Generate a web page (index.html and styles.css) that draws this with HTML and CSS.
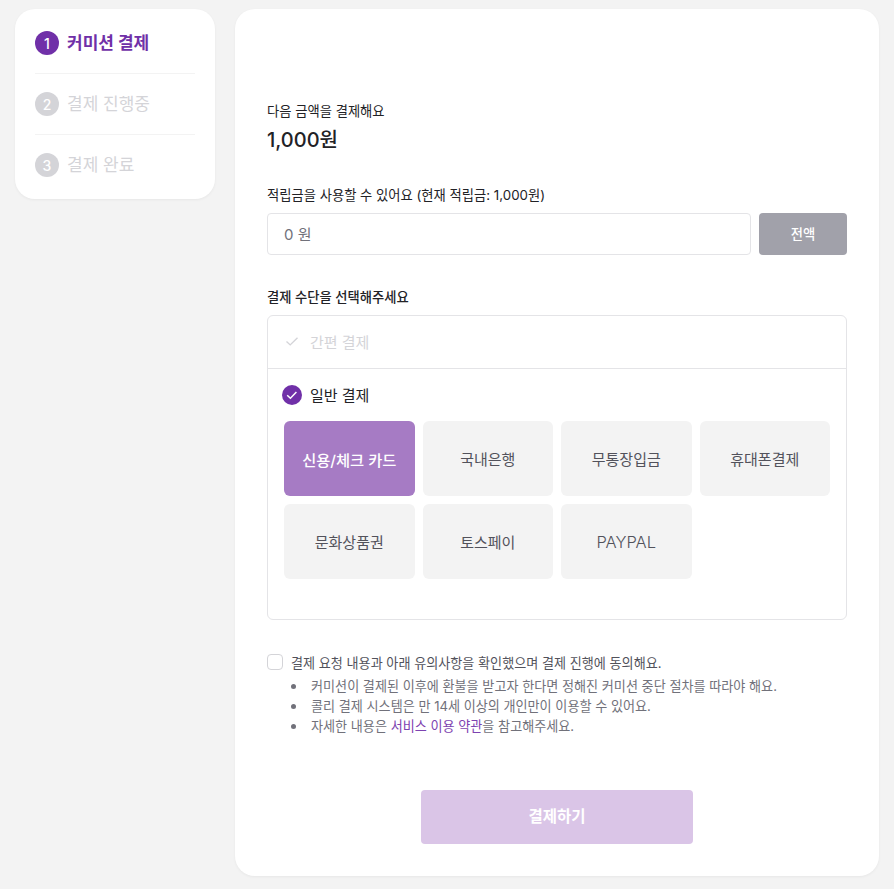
FILE: index.html
```html
<!DOCTYPE html>
<html lang="ko">
  <head>
    <meta charset="UTF-8" />
    <meta name="viewport" content="width=device-width, initial-scale=1.0" />
    <title>커미션 결제</title>
    <link rel="stylesheet" href="styles.css">
  </head>
  <body>
    <div class="page">
      <div class="steps">
        <div class="step active"><span class="num">1</span><span class="step-name">커미션 결제</span></div>
        <div class="step"><span class="num">2</span><span class="step-name">결제 진행중</span></div>
        <div class="step"><span class="num">3</span><span class="step-name">결제 완료</span></div>
      </div>

      <div class="main">
        <div class="label">다음 금액을 결제해요</div>
        <div class="amount">1,000원</div>

        <div class="label points-label">적립금을 사용할 수 있어요 (현재 적립금: 1,000원)</div>
        <div class="points-row">
          <div class="points-input">0 원</div>
          <div class="all-btn">전액</div>
        </div>

        <div class="label method-label">결제 수단을 선택해주세요</div>
        <div class="methods">
          <div class="method-head simple">
            <svg class="tick" width="20" height="20" viewBox="0 0 20 20"><path d="M4.5 10.5l3.7 3.4L15.5 6.8" fill="none" stroke="#d4d4d8" stroke-width="1.4"/></svg>
            <span>간편 결제</span>
          </div>
          <div class="general">
            <div class="method-head">
              <svg width="20" height="20" viewBox="0 0 20 20"><circle cx="10" cy="10" r="10" fill="#7030a8"/><path d="M5.2 10.3l3.2 3 6-6.2" fill="none" stroke="#fff" stroke-width="1.5"/></svg>
              <span>일반 결제</span>
            </div>
            <div class="pay-grid">
              <div class="pay selected">신용/체크 카드</div>
              <div class="pay">국내은행</div>
              <div class="pay">무통장입금</div>
              <div class="pay">휴대폰결제</div>
              <div class="pay">문화상품권</div>
              <div class="pay">토스페이</div>
              <div class="pay latin">PAYPAL</div>
            </div>
          </div>
        </div>

        <div class="agree">
          <span class="checkbox"></span>
          <span>결제 요청 내용과 아래 유의사항을 확인했으며 결제 진행에 동의해요.</span>
        </div>
        <ul class="notes">
          <li>커미션이 결제된 이후에 환불을 받고자 한다면 정해진 커미션 중단 절차를 따라야 해요.</li>
          <li>콜리 결제 시스템은 만 14세 이상의 개인만이 이용할 수 있어요.</li>
          <li>자세한 내용은 <a class="terms">서비스 이용 약관</a>을 참고해주세요.</li>
        </ul>

        <div class="pay-btn">결제하기</div>
      </div>
    </div>
  </body>
</html>
```

FILE: styles.css
```css
* {
  box-sizing: border-box;
}
body {
  margin: 0;
  background-color: #f3f3f3;
  color: #222226;
  font-family: "Inter", "Noto Sans CJK KR", sans-serif;
}
.page {
  display: flex;
  align-items: flex-start;
  gap: 20px;
  padding: 9px 15px 13px 15px;
}

.steps {
  width: 200px;
  padding: 4px 20px;
  background-color: white;
  border-radius: 20px;
  box-shadow: 0 1px 3px rgba(0, 0, 0, 0.05);
}
.step {
  display: flex;
  align-items: center;
  gap: 8px;
  height: 61px;
  border-bottom: 1px solid #f3f3f3;
  color: #d4d4d8;
  font-size: 17px;
}
.step:last-child {
  height: 60px;
  border-bottom: none;
}
.step.active {
  color: #7030a8;
  font-weight: 700;
}
.step-name {
  padding-bottom: 4px;
}
.num {
  display: flex;
  align-items: center;
  justify-content: center;
  width: 24px;
  height: 24px;
  border-radius: 50%;
  background-color: #d4d4d8;
  color: white;
  font-size: 14px;
  font-weight: 500;
}
.active .num {
  background-color: #7030a8;
}

.main {
  width: 644px;
  height: 867px;
  padding: 91px 32px 32px 32px;
  background-color: white;
  border-radius: 20px;
  box-shadow: 0 1px 3px rgba(0, 0, 0, 0.05);
}
.label {
  height: 20px;
  line-height: 22px;
  font-size: 13.3px;
}
.amount {
  margin-top: 6px;
  height: 28px;
  line-height: 28px;
  font-size: 20px;
  font-weight: 500;
}
.points-label {
  margin-top: 30px;
}
.points-row {
  display: flex;
  gap: 8px;
  margin-top: 9px;
}
.points-input {
  flex: 1;
  height: 42px;
  line-height: 42px;
  padding-left: 16px;
  border: 1px solid #e4e4e7;
  border-radius: 4px;
  color: #71717a;
  font-size: 15px;
}
.all-btn {
  width: 88px;
  height: 42px;
  line-height: 42px;
  text-align: center;
  background-color: #a1a1aa;
  border-radius: 4px;
  color: white;
  font-size: 13.3px;
  font-weight: 500;
}
.method-label {
  margin-top: 32px;
  line-height: 20px;
  font-weight: 500;
}
.methods {
  height: 305px;
  margin-top: 8px;
  border: 1px solid #e4e4e7;
  border-radius: 6px;
}
.method-head {
  display: flex;
  align-items: center;
  gap: 8px;
  font-size: 15px;
}
.method-head.simple {
  height: 53px;
  padding: 0 0 2px 14px;
  border-bottom: 1px solid #e4e4e7;
  color: #d4d4d8;
}
.general {
  padding: 15px 16px 0 14px;
}
.pay-grid {
  display: grid;
  grid-template-columns: repeat(4, 1fr);
  gap: 8px;
  margin-top: 16px;
  padding-left: 2px;
}
.pay {
  display: flex;
  align-items: center;
  justify-content: center;
  height: 75px;
  background-color: #f3f3f3;
  border-radius: 6px;
  color: #52525b;
  font-size: 15px;
}
.pay.selected {
  background-color: #a67bc4;
  color: white;
  font-size: 15.3px;
  font-weight: 500;
}
.pay.latin {
  font-size: 16.5px;
  font-weight: 300;
}

.agree {
  display: flex;
  align-items: center;
  gap: 8px;
  margin-top: 32px;
  height: 20px;
  color: #52525b;
  font-size: 13.1px;
}
.checkbox {
  width: 16px;
  height: 16px;
  border: 1px solid #d4d4d8;
  border-radius: 4px;
}
.notes {
  margin: 4px 0 0 0;
  padding-left: 24px;
  list-style: none;
  color: #71717a;
  font-size: 13.1px;
  line-height: 20px;
}
.notes li::before {
  content: "";
  display: inline-block;
  width: 5px;
  height: 5px;
  margin-right: 15px;
  border-radius: 50%;
  background-color: #71717a;
  vertical-align: 2px;
}
.terms {
  color: #7d42b0;
}
.pay-btn {
  width: 272px;
  height: 54px;
  line-height: 54px;
  margin: 54px auto 0 auto;
  text-align: center;
  background-color: #dac5e7;
  border-radius: 4px;
  color: white;
  font-size: 15.5px;
  font-weight: 700;
}
```
